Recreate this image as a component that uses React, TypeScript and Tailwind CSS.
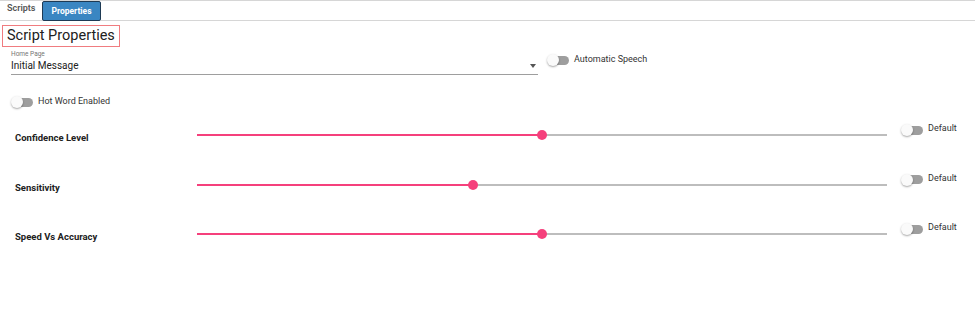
import React from "react";

function Toggle() {
  return (
    <span className="relative inline-flex h-[14px] w-[22px] items-center shrink-0">
      <span className="ml-[4px] h-[9px] w-[18px] rounded-full bg-[#9e9e9e]" />
      <span className="absolute left-0 top-[1px] h-[12px] w-[12px] rounded-full bg-[#fafafa] shadow-[0_1px_2px_rgba(0,0,0,0.35)]" />
    </span>
  );
}

function SliderRow({ label, value }: { label: string; value: number }) {
  return (
    <div className="flex items-start h-[49.5px]">
      <div className="w-[197px] shrink-0 pl-[15px] pt-[4px] text-[9.5px] font-bold text-[#212121]">{label}</div>
      <div className="relative mt-[7px] h-[2px] w-[690px] shrink-0 bg-[#bdbdbd]">
        <div className="absolute left-0 top-0 h-[2px] bg-[#f5407c]" style={{ width: `${value}%` }} />
        <div
          className="absolute top-[-4px] h-[10px] w-[10px] -translate-x-1/2 rounded-full bg-[#f5407c]"
          style={{ left: `${value}%` }}
        />
      </div>
      <div className="ml-[14px] -mt-[4px] flex items-center gap-[5px] text-[9px] text-[#333]">
        <Toggle />
        <span className="-mt-[2px]">Default</span>
      </div>
    </div>
  );
}

export default function App() {
  return (
    <div className="h-[318px] w-[975px] bg-white font-['Roboto',sans-serif] text-[#212121]">
      <div className="border-t border-[#d6d6d6] h-[1px]" />
      <div className="flex items-end h-[20px] border-b border-[#d6d6d6]">
        <span className="px-[7px] pb-[5px] text-[9px] font-semibold text-[#555]">Scripts</span>
        <span className="mb-[-1px] rounded-[2px] border border-[#1e3a54] bg-[#3a86c2] px-[8px] pt-[4px] pb-[3px] text-[8.5px] font-bold leading-[11px] text-white">
          Properties
        </span>
      </div>
      <div className="px-[2px] pt-[2px]">
        <h1 className="inline-block border border-[#f07c80] px-[4px] text-[14.5px] leading-[20px] text-[#212121]">
          Script Properties
        </h1>
      </div>
      <div className="flex items-start pl-[11px] pt-[3px]">
        <div className="w-[527px] border-b border-[#9e9e9e]">
          <div className="text-[6.5px] leading-[8px] text-[#757575]">Home Page</div>
          <div className="flex items-center justify-between pr-[2px] pt-[2px] pb-[2px]">
            <span className="text-[10px] leading-[12px]">Initial Message</span>
            <span className="h-0 w-0 border-x-[3.5px] border-t-[4px] border-x-transparent border-t-[#555]" />
          </div>
        </div>
        <div className="ml-[9px] mt-[3px] flex items-center gap-[5px] text-[9px] text-[#333]">
          <Toggle />
          <span className="-mt-[1px]">Automatic Speech</span>
        </div>
      </div>
      <div className="flex items-center gap-[5px] pl-[11px] pt-[20px] text-[9px] text-[#333]">
        <Toggle />
        <span className="-mt-[1px]">Hot Word Enabled</span>
      </div>
      <div className="pt-[18px]">
        <SliderRow label="Confidence Level" value={50} />
        <SliderRow label="Sensitivity" value={40} />
        <SliderRow label="Speed Vs Accuracy" value={50} />
      </div>
    </div>
  );
}
